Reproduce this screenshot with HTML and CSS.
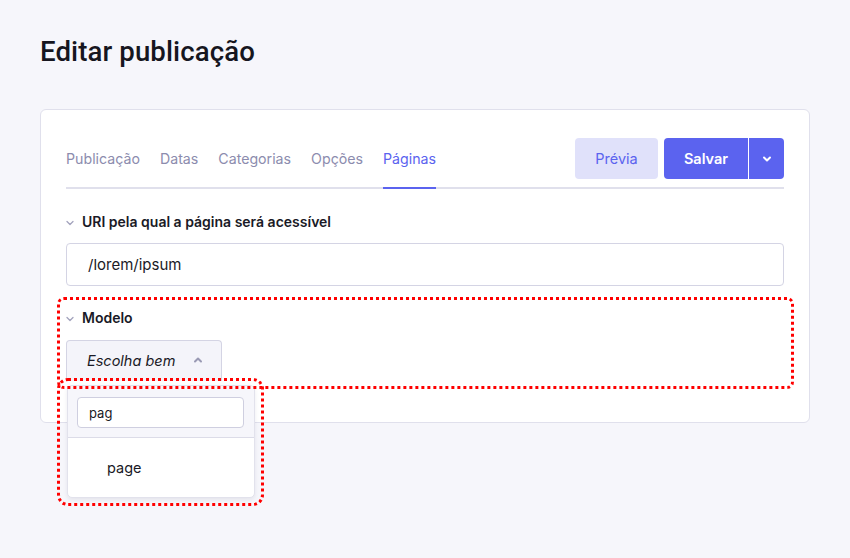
FILE: index.html
```html
<!DOCTYPE html>
<html lang="pt">
<head>
<meta charset="utf-8">
<title>Editar publicação</title>
<link rel="stylesheet" href="styles.css">
</head>
<body>
<main class="page">
  <h1 class="title">Editar publicação</h1>
  <section class="card">
    <div class="toolbar">
      <nav class="tabs">
        <a class="tab">Publicação</a>
        <a class="tab">Datas</a>
        <a class="tab">Categorias</a>
        <a class="tab">Opções</a>
        <a class="tab active">Páginas</a>
      </nav>
      <div class="actions">
        <button class="btn btn-light">Prévia</button>
        <div class="split">
          <button class="btn btn-primary">Salvar</button>
          <button class="btn btn-primary btn-caret" aria-label="Mais">
            <svg width="10" height="10" viewBox="0 0 10 10"><path d="M2 3.5 L5 6.5 L8 3.5" fill="none" stroke="#fff" stroke-width="2" stroke-linecap="round" stroke-linejoin="round"/></svg>
          </button>
        </div>
      </div>
    </div>

    <div class="field">
      <div class="label">
        <svg class="chev" width="8" height="8" viewBox="0 0 8 8"><path d="M1 2.5 L4 5.5 L7 2.5" fill="none" stroke="#a3a3bd" stroke-width="1.3" stroke-linecap="round" stroke-linejoin="round"/></svg>
        <span>URI pela qual a página será acessível</span>
      </div>
      <div class="input">/lorem/ipsum</div>
    </div>

    <div class="field field-model">
      <div class="label">
        <svg class="chev" width="8" height="8" viewBox="0 0 8 8"><path d="M1 2.5 L4 5.5 L7 2.5" fill="none" stroke="#a3a3bd" stroke-width="1.3" stroke-linecap="round" stroke-linejoin="round"/></svg>
        <span>Modelo</span>
      </div>
      <div class="select">
        <span class="select-text">Escolha bem</span>
        <svg width="10" height="10" viewBox="0 0 10 10"><path d="M2 6.5 L5 3.5 L8 6.5" fill="none" stroke="#9a9ab4" stroke-width="2" stroke-linecap="round" stroke-linejoin="round"/></svg>
      </div>
      <div class="dropdown">
        <div class="dropdown-search"><div class="search-input">pag</div></div>
        <div class="dropdown-item">page</div>
      </div>
      <div class="mark mark-field"></div>
      <div class="mark mark-dropdown"></div>
    </div>
  </section>
</main>
</body>
</html>
```
FILE: styles.css
```css
* { box-sizing: border-box; }
html, body { margin: 0; padding: 0; }
body {
  background: #f6f6fb;
  font-family: Inter, "Noto Sans", sans-serif;
  color: #1a1a26;
  width: 850px;
  height: 558px;
  overflow: hidden;
}
.page { padding: 35px 40px 0 40px; }
.title {
  margin: 0;
  font-family: Roboto, Inter, sans-serif;
  font-size: 27.6px;
  font-weight: 500;
  line-height: 34px;
  color: #16161f;
  letter-spacing: 0.1px;
}
.card {
  margin-top: 40px;
  width: 770px;
  height: 314px;
  background: #fff;
  border: 1px solid #e0e0ec;
  border-radius: 6px;
  padding: 28px 25px 0 25px;
}
.toolbar {
  display: flex;
  justify-content: space-between;
  align-items: flex-start;
  border-bottom: 2px solid #e0e0ec;
  height: 51px;
}
.tabs { display: flex; gap: 20px; padding-top: 12px; }
.tab {
  font-size: 14.2px;
  color: #8c8cae;
  line-height: 18px;
  padding-bottom: 19px;
  border-bottom: 2px solid transparent;
  cursor: pointer;
}
.tab.active { color: #5b63ef; border-bottom-color: #5b63ef; }
.actions { display: flex; gap: 6px; }
.btn {
  font-family: Inter, sans-serif;
  font-size: 14.5px;
  height: 41px;
  border: none;
  border-radius: 4px;
  cursor: pointer;
}
.btn-light { background: #e0e1fa; color: #5b63ef; width: 83px; }
.split { display: flex; }
.btn-primary { background: #5b63ef; color: #fff; font-weight: 600; }
.split .btn-primary:first-child { width: 84px; border-radius: 4px 0 0 4px; }
.btn-caret {
  width: 36px;
  border-radius: 0 4px 4px 0;
  border-left: 1px solid #fff;
  display: flex; align-items: center; justify-content: center;
}
.field { margin-top: 24px; position: relative; }
.label {
  display: flex; align-items: center; gap: 8px;
  font-size: 14px; font-weight: 600; color: #1a1a26;
  line-height: 18px;
}
.chev { margin-top: 1px; }
.input {
  margin-top: 12px;
  height: 43px;
  border: 1px solid #d4d4e4;
  border-radius: 4px;
  padding: 0 21px;
  display: flex; align-items: center;
  font-size: 15px; color: #1a1a26;
}
.field-model { margin-top: 23px; }
.select {
  margin-top: 13px;
  width: 156px;
  height: 41px;
  background: #f4f4fa;
  border: 1px solid #d4d4e4;
  border-bottom: none;
  border-radius: 4px 4px 0 0;
  display: flex; align-items: center; justify-content: space-between;
  padding: 0 18px 2px 20px;
}
.select-text { font-style: italic; font-size: 14.5px; color: #1a1a26; }
.dropdown {
  position: absolute;
  left: 1px; top: 76px;
  width: 188px;
  background: #fff;
  border: 1px solid #e2e2ec;
  border-radius: 5px;
  box-shadow: 0 2px 4px rgba(30,30,60,0.08);
  overflow: hidden;
  z-index: 2;
}
.dropdown-search {
  background: #f6f6fb;
  padding: 11px 10px 9px 9px;
  border-bottom: 1px solid #dcdce8;
}
.search-input {
  height: 31px;
  background: #fff;
  border: 1px solid #cfcfe0;
  border-radius: 4px;
  padding: 0 11px;
  display: flex; align-items: center;
  font-size: 13px; color: #1a1a26;
}
.dropdown-item {
  height: 59px;
  display: flex; align-items: center;
  padding-left: 39px;
  font-size: 14.5px; color: #1a1a26;
}
.mark {
  position: absolute;
  border: 3px dotted #ff0000;
  pointer-events: none;
  z-index: 3;
}
.mark-field { left: -9px; top: -12px; width: 737px; height: 92px; border-radius: 7px; }
.mark-dropdown { left: -9px; top: 69px; width: 207px; height: 128px; border-radius: 11px; }
```
